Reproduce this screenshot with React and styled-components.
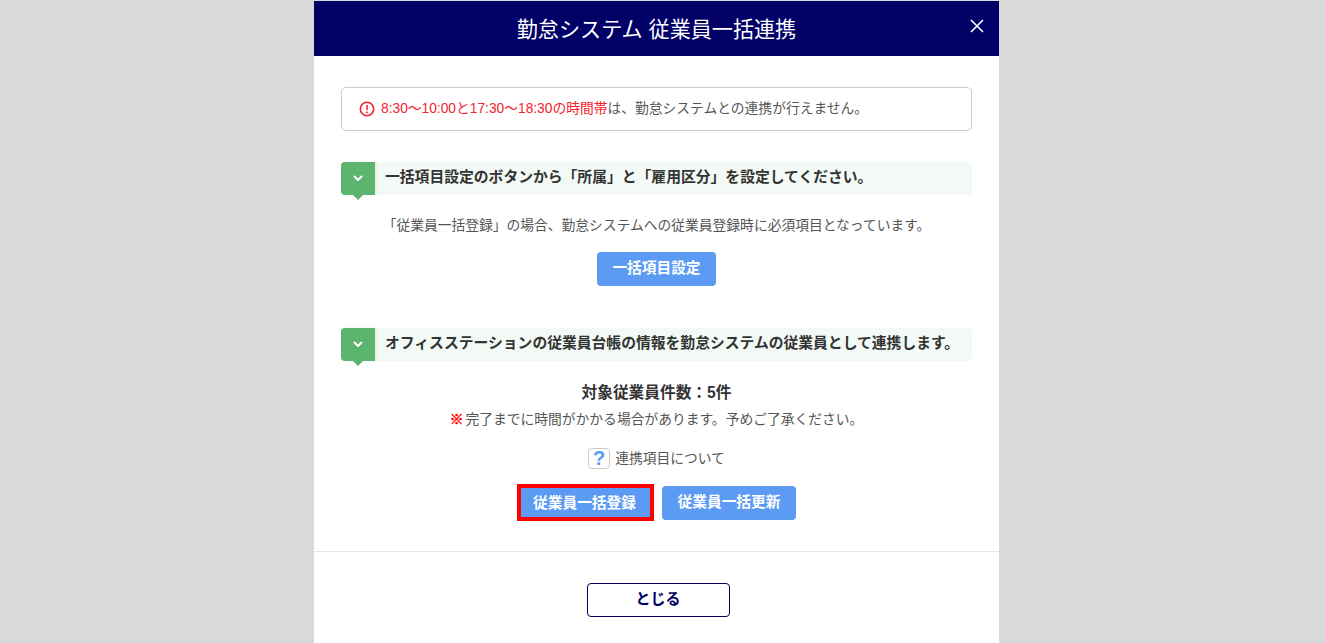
import React from "react";
import styled, { createGlobalStyle } from "styled-components";

const Global = createGlobalStyle`
  html, body { margin: 0; padding: 0; height: 100%; background: #d9d9d9; overflow: hidden; }
  body { font-family: "Liberation Sans", "Noto Sans CJK JP", sans-serif; color: #333; }
`;
const Modal = styled.div`
  width: 685px; height: 642px; margin: 1px 0 0 314px; background: #fff;
  display: flex; flex-direction: column; overflow: hidden;
`;
const Header = styled.header`
  height: 55px; flex: none; box-sizing: border-box; padding-bottom: 2px; background: #000066; color: #fff; position: relative;
  display: flex; align-items: center; justify-content: center;
  font-size: 21.1px;
`;
const Close = styled.button`
  position: absolute; right: 14px; top: 17px; width: 16px; height: 16px; padding: 0;
  border: 0; background: none; display: block; color: #fff;
  svg { display: block; }
`;
const Body = styled.div`
  padding: 31px 27px 0; display: flex; flex-direction: column; height: 495px; flex: none; box-sizing: border-box;
`;
const Notice = styled.div`
  height: 44px; flex: none; box-sizing: border-box; border: 1px solid #ccc; border-radius: 5px;
  display: flex; align-items: center; padding-left: 17px; gap: 6px; font-size: 13.78px; color: #555;
  svg { flex: none; margin-bottom: 1px; }
`;
const NoticeText = styled.span`margin-bottom: 5px;`;
const Red = styled.span`color: #f5222d;`;
const SectionHead = styled.div`
  margin-top: ${p => p.$top}px; height: 33px; flex: none; background: #f3faf5; border-radius: 4px;
  display: flex; align-items: center; font-size: 14.8px; font-weight: 700; color: #333;
`;
const SectionText = styled.span`margin-bottom: 6px;`;
const Badge = styled.div`
  width: 34px; height: 33px; flex: none; background: #5cb56f; border-radius: 4px 0 0 4px;
  display: flex; align-items: center; justify-content: center; position: relative;
  margin-right: 10px; box-shadow: 2px 0 4px rgba(0,0,0,.05);
  &::after {
    content: ""; position: absolute; left: 12px; bottom: -5px; border-style: solid;
    border-width: 5px 5px 0; border-color: #5cb56f transparent transparent;
  }
`;
const Note = styled.p`
  margin: ${p => p.$top}px 0 0; text-align: center; font-size: 13.78px; line-height: 20px; color: #555;
`;
const Count = styled.p`
  margin: 21px 0 0; text-align: center; font-size: 15.7px; line-height: 22px; font-weight: 700; color: #333;
`;
const Mark = styled.span`color: #f00; font-weight: 700; margin-right: 2px; -webkit-text-stroke: .5px #f00;`;
const HelpRow = styled.div`
  margin-top: 17px; display: flex; justify-content: center; align-items: center; gap: 5px;
  font-size: 13.78px; color: #555; height: 22px;
`;
const HelpText = styled.span`margin-bottom: 2px;`;
const HelpIcon = styled.span`
  width: 22px; height: 21px; box-sizing: border-box; border: 1px solid #ccc; border-radius: 4px;
  display: flex; align-items: center; justify-content: center;
  color: #5b9bf3; font-size: 20px; font-weight: 700; line-height: 1;
`;
const Actions = styled.div`
  display: flex; justify-content: center; align-items: center; margin-top: ${p => p.$top}px; gap: ${p => p.$gap}px;
`;
const Primary = styled.button`
  height: 34px; width: ${p => p.$w}px; box-sizing: border-box; padding: 0 0 5px; border: 0; border-radius: 4px;
  background: #5b9bf3; color: #fff; font: 700 14.7px "Liberation Sans", "Noto Sans CJK JP", sans-serif;
`;
const Highlight = styled.div`
  border: 4px solid #f00; display: flex; width: 137px; height: 37px; box-sizing: border-box;
  ${Primary} { border-radius: 0; width: 100%; height: 100%; padding: 0 2px 3px 0; }
`;
const Footer = styled.footer`
  border-top: 1px solid #e5e5e5; flex: none; display: flex; justify-content: center; padding-top: 31px; padding-left: 3px;
`;
const Secondary = styled.button`
  width: 143px; height: 34px; background: #fff; border: 1px solid #000066; border-radius: 4px; padding: 0 0 5px;
  color: #000066; font: 700 15px "Liberation Sans", "Noto Sans CJK JP", sans-serif;
`;
const Chevron = () => (
  <svg width="10" height="7" viewBox="0 0 10 7" fill="none" stroke="#fff" strokeWidth="2" strokeLinecap="round" strokeLinejoin="round">
    <path d="M1.5 1.5 5 5l3.5-3.5" />
  </svg>
);

export default function App() {
  return (
    <>
      <Global />
      <Modal>
        <Header>
          勤怠システム 従業員一括連携
          <Close aria-label="閉じる">
            <svg width="16" height="16" viewBox="0 0 16 16" fill="none" stroke="currentColor" strokeWidth="1.6">
              <path d="M2 2l12 12M14 2L2 14" />
            </svg>
          </Close>
        </Header>
        <Body>
          <Notice>
            <svg width="16" height="16" viewBox="0 0 16 16" fill="none" stroke="#f5222d" strokeWidth="1.6">
              <circle cx="8" cy="8" r="6.7" />
              <path d="M8 4v5M8 10.6v1.6" />
            </svg>
            <NoticeText><Red>8:30～10:00と17:30～18:30の時間帯</Red>は、勤怠システムとの連携が行えません。</NoticeText>
          </Notice>
          <SectionHead $top={31}>
            <Badge><Chevron /></Badge>
            <SectionText>一括項目設定のボタンから「所属」と「雇用区分」を設定してください。</SectionText>
          </SectionHead>
          <Note $top={21}>「従業員一括登録」の場合、勤怠システムへの従業員登録時に必須項目となっています。</Note>
          <Actions $top={16}>
            <Primary $w={119}>一括項目設定</Primary>
          </Actions>
          <SectionHead $top={42}>
            <Badge><Chevron /></Badge>
            <SectionText>オフィスステーションの従業員台帳の情報を勤怠システムの従業員として連携します。</SectionText>
          </SectionHead>
          <Count>対象従業員件数：5件</Count>
          <Note $top={6}><Mark>※</Mark>完了までに時間がかかる場合があります。予めご了承ください。</Note>
          <HelpRow>
            <HelpIcon>?</HelpIcon>
            <HelpText>連携項目について</HelpText>
          </HelpRow>
          <Actions $top={15} $gap={8}>
            <Highlight><Primary>従業員一括登録</Primary></Highlight>
            <Primary $w={134}>従業員一括更新</Primary>
          </Actions>
        </Body>
        <Footer>
          <Secondary>とじる</Secondary>
        </Footer>
      </Modal>
    </>
  );
}
